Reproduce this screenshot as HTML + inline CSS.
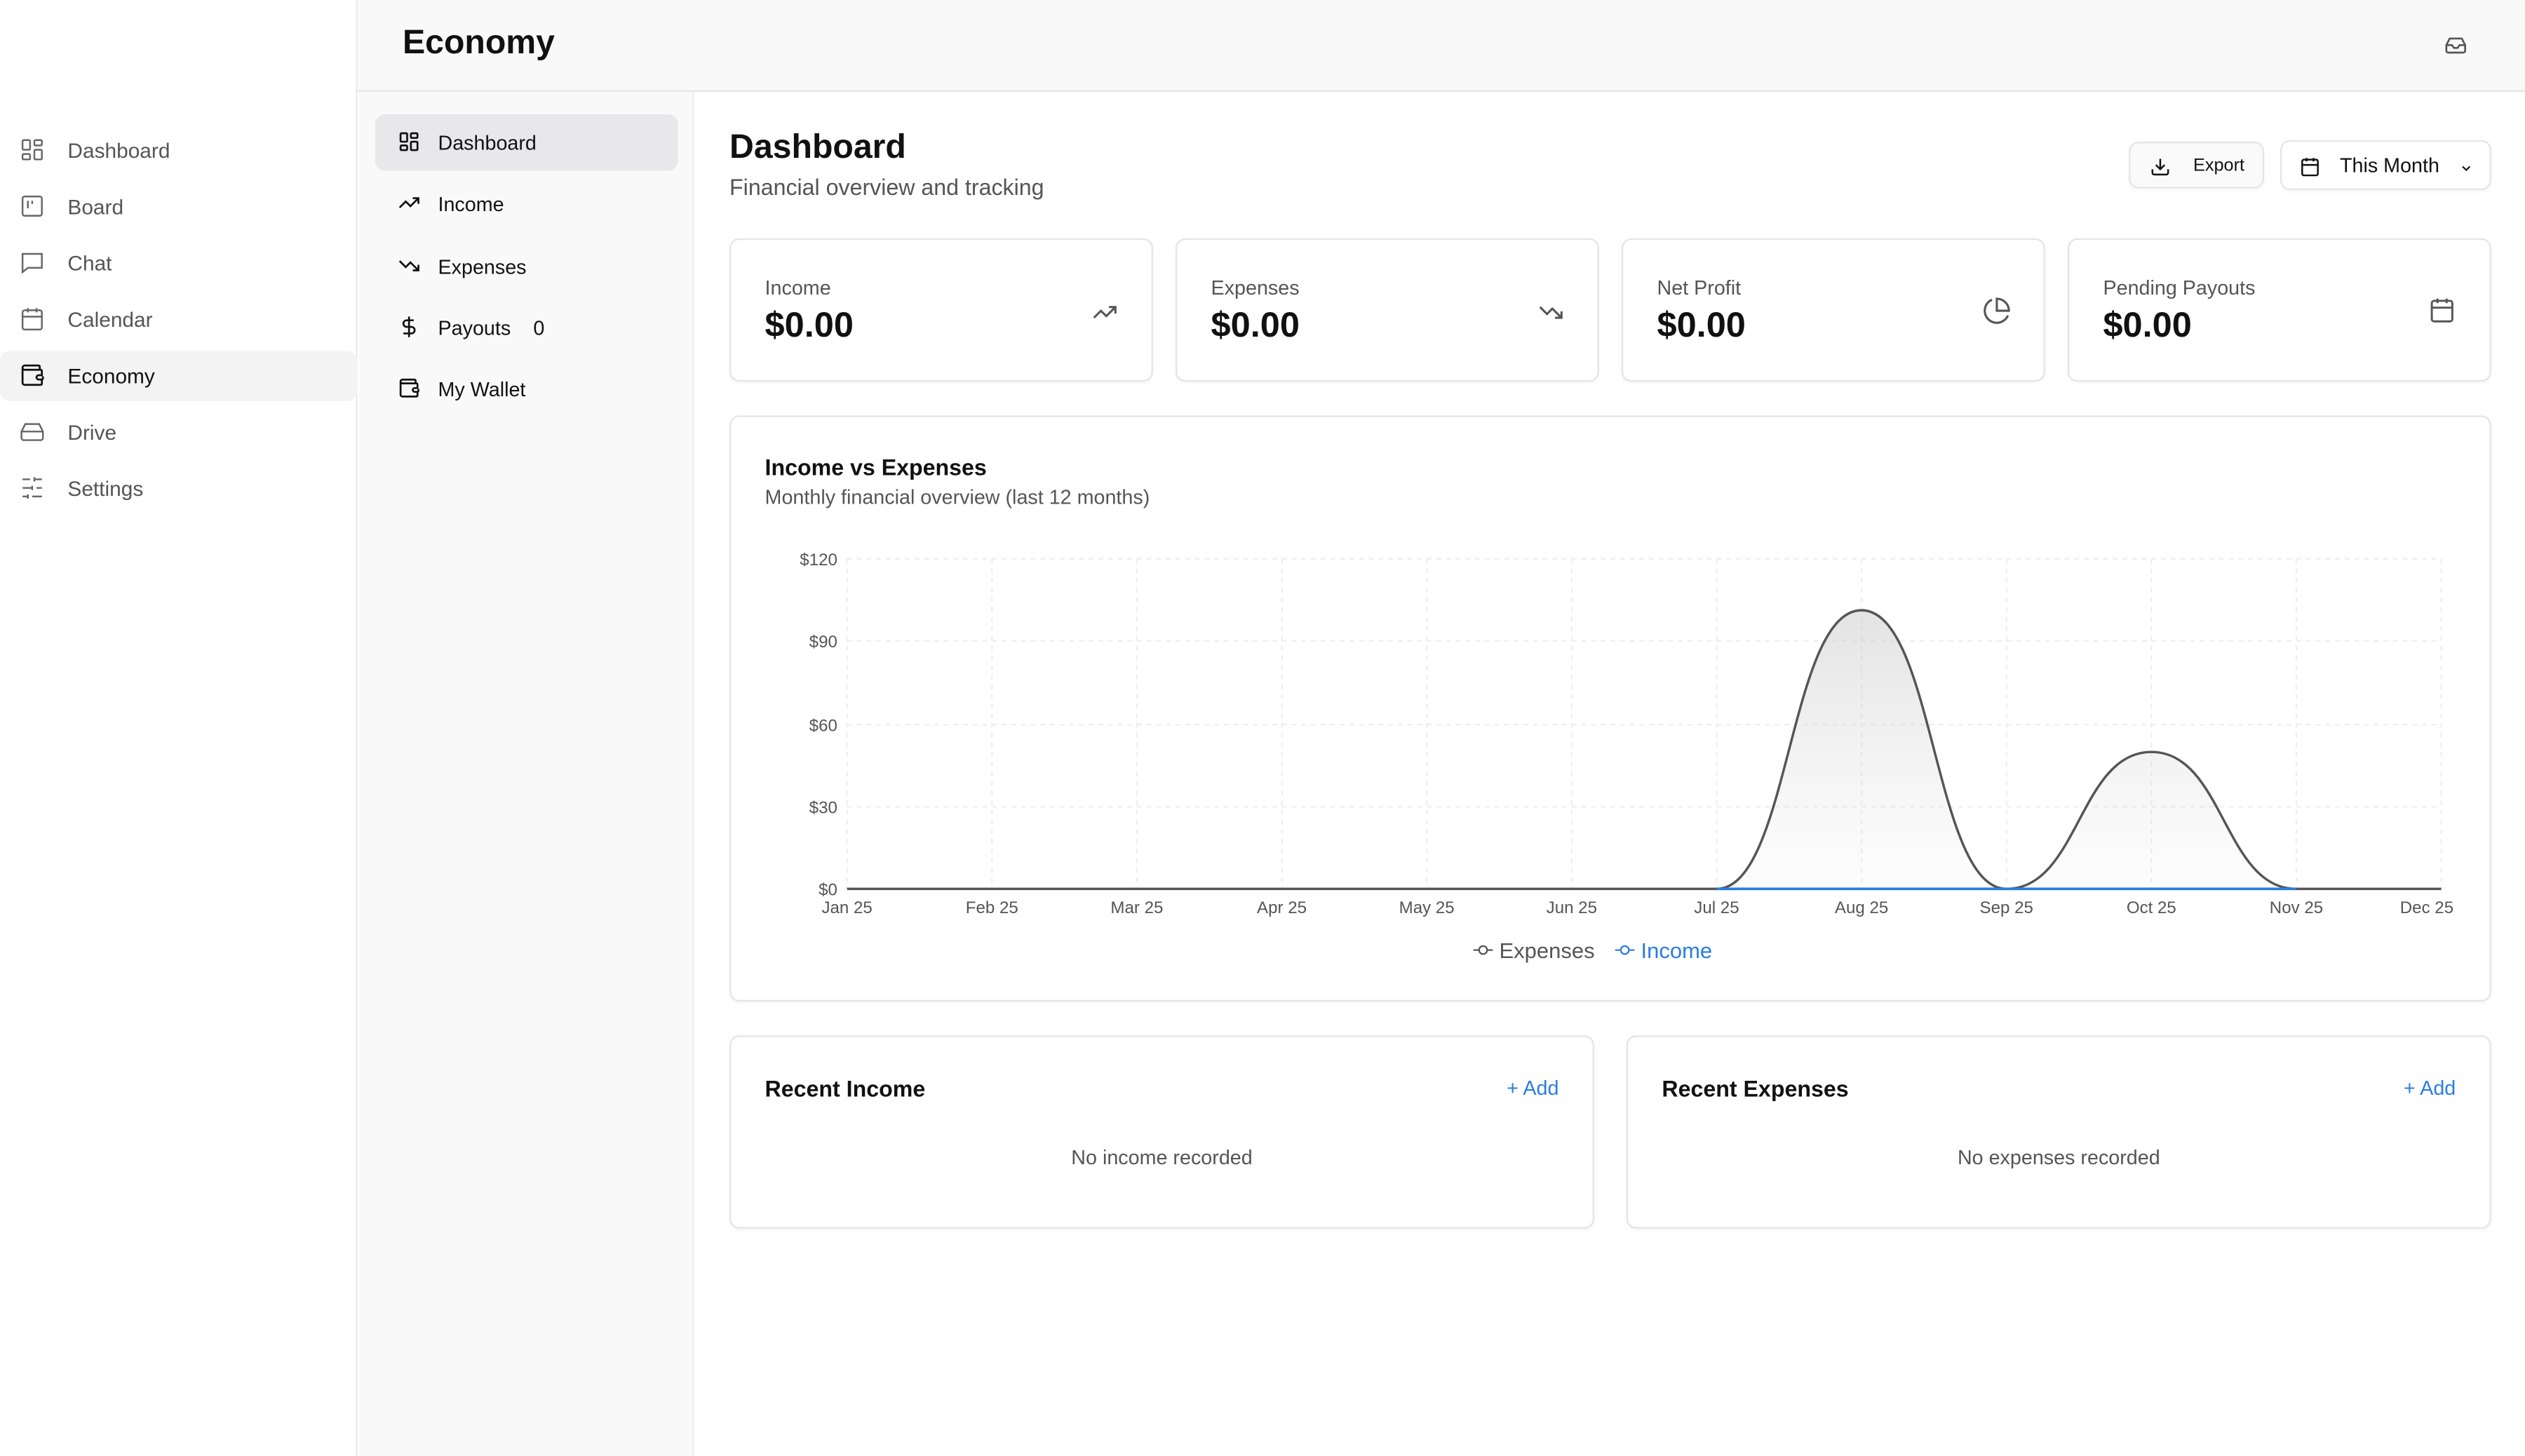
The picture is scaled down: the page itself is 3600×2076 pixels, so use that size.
<!DOCTYPE html>
<html><head><meta charset="utf-8"><style>
*{box-sizing:border-box;margin:0;padding:0}
html,body{width:3600px;height:2076px;overflow:hidden;background:#fff;font-family:"Liberation Sans",sans-serif}
#w{width:1568px;height:904.2px;transform:scale(2.295918);transform-origin:0 0;position:relative;color:#111}
.a{position:absolute}
.side{left:0;top:0;width:222px;height:905px;background:#fff;border-right:1px solid #ebebeb}
.top{left:222px;top:0;right:0;height:57px;background:#f9f9f9;border-bottom:1px solid #e6e6e6}
.sub{left:223px;top:57px;width:208px;height:848px;background:#f9f9f9;border-right:1px solid #ececec}
.ni{position:absolute;left:0;width:222px;height:31px;font-size:13px;color:#555;display:flex;align-items:center;padding-left:42px}
.ni svg{position:absolute;left:12px;top:7px}
.si{position:absolute;left:233px;width:188px;height:35px;font-size:12.5px;color:#111;display:flex;align-items:center;padding-left:39px}
.si svg{position:absolute;left:14px;top:10px}
.card{background:#fff;border:1px solid #e5e5e5;border-radius:6px;box-shadow:0 1px 2px rgba(0,0,0,.04)}
.lbl{font-size:12.5px;color:#555}
.val{font-size:22px;font-weight:bold;color:#111}
svg{overflow:visible}
</style></head><body><div id="w">
<div class="a side"></div>
<div class="ni" style="top:78px"><svg width="16" height="16" viewBox="0 0 24 24" fill="none" stroke="#666" stroke-width="1.6"><rect x="3" y="3" width="7" height="9" rx="1"/><rect x="14" y="3" width="7" height="5" rx="1"/><rect x="14" y="12" width="7" height="9" rx="1"/><rect x="3" y="16" width="7" height="5" rx="1"/></svg>Dashboard</div>
<div class="ni" style="top:113px"><svg width="16" height="16" viewBox="0 0 24 24" fill="none" stroke="#666" stroke-width="1.6"><rect x="3" y="3" width="18" height="18" rx="2"/><path d="M8 7v7M12 7v3"/></svg>Board</div>
<div class="ni" style="top:148px"><svg width="16" height="16" viewBox="0 0 24 24" fill="none" stroke="#666" stroke-width="1.6"><path d="M3 4h18v13H8l-5 4z"/></svg>Chat</div>
<div class="ni" style="top:183px"><svg width="16" height="16" viewBox="0 0 24 24" fill="none" stroke="#666" stroke-width="1.6"><rect x="3" y="4" width="18" height="18" rx="2"/><path d="M8 2v4M16 2v4M3 10h18"/></svg>Calendar</div>
<div class="ni" style="top:218px;background:#f3f3f3;border-radius:6px;color:#111"><svg width="16" height="16" viewBox="0 0 24 24" fill="none" stroke="#111" stroke-width="1.8"><path d="M19 7V4a1 1 0 0 0-1-1H5a2 2 0 0 0 0 4h15a1 1 0 0 1 1 1v4h-3a2 2 0 0 0 0 4h3a1 1 0 0 0 1-1v-2"/><path d="M3 5v14a2 2 0 0 0 2 2h15a1 1 0 0 0 1-1v-4"/></svg>Economy</div>
<div class="ni" style="top:253px"><svg width="16" height="16" viewBox="0 0 24 24" fill="none" stroke="#666" stroke-width="1.6"><path d="M2 12h20M5.5 5h13L22 12v6a2 2 0 0 1-2 2H4a2 2 0 0 1-2-2v-6z"/><path d="M6 16h.01M10 16h.01"/></svg>Drive</div>
<div class="ni" style="top:288px"><svg width="16" height="16" viewBox="0 0 24 24" fill="none" stroke="#666" stroke-width="1.6"><path d="M3 4h7M14 4h7M3 12h9M16 12h5M3 20h5M12 20h9M14 2v4M12 10v4M8 18v4"/></svg>Settings</div>

<div class="a top"><div class="a" style="left:28px;top:15px;font-size:21px;font-weight:bold">Economy</div>
<svg class="a" style="left:1296px;top:21px" width="14" height="14" viewBox="0 0 24 24" fill="none" stroke="#555" stroke-width="2"><path d="M22 12h-6l-2 3h-4l-2-3H2"/><path d="M5.5 5h13L22 12v6a2 2 0 0 1-2 2H4a2 2 0 0 1-2-2v-6z"/></svg></div>

<div class="a sub"></div>
<div class="si" style="top:71px;background:#e8e8ea;border-radius:6px"><svg width="14" height="14" viewBox="0 0 24 24" fill="none" stroke="#111" stroke-width="2"><rect x="3" y="3" width="7" height="9" rx="1"/><rect x="14" y="3" width="7" height="5" rx="1"/><rect x="14" y="12" width="7" height="9" rx="1"/><rect x="3" y="16" width="7" height="5" rx="1"/></svg>Dashboard</div>
<div class="si" style="top:109px"><svg width="14" height="14" viewBox="0 0 24 24" fill="none" stroke="#111" stroke-width="2"><path d="M22 7l-8.5 8.5-5-5L2 17M16 7h6v6"/></svg>Income</div>
<div class="si" style="top:148px"><svg width="14" height="14" viewBox="0 0 24 24" fill="none" stroke="#111" stroke-width="2"><path d="M22 17l-8.5-8.5-5 5L2 7M16 17h6v-6"/></svg>Expenses</div>
<div class="si" style="top:186px"><svg width="14" height="14" viewBox="0 0 24 24" fill="none" stroke="#111" stroke-width="2"><path d="M12 1v22M17 5H9.5a3.5 3.5 0 0 0 0 7h5a3.5 3.5 0 0 1 0 7H6"/></svg>Payouts<span style="margin-left:14px">0</span></div>
<div class="si" style="top:224px"><svg width="14" height="14" viewBox="0 0 24 24" fill="none" stroke="#111" stroke-width="2"><path d="M19 7V4a1 1 0 0 0-1-1H5a2 2 0 0 0 0 4h15a1 1 0 0 1 1 1v4h-3a2 2 0 0 0 0 4h3a1 1 0 0 0 1-1v-2"/><path d="M3 5v14a2 2 0 0 0 2 2h15a1 1 0 0 0 1-1v-4"/></svg>My Wallet</div>

<div class="a" style="left:453px;top:80px;font-size:21px;font-weight:bold">Dashboard</div>
<div class="a" style="left:453px;top:108px;font-size:14px;color:#555">Financial overview and tracking</div>
<div class="a card" style="left:1322px;top:88px;width:84px;height:29px;font-size:11px;display:flex;align-items:center;padding-left:39px;background:#fafafa"><svg class="a" style="left:12px;top:8px" width="13" height="13" viewBox="0 0 24 24" fill="none" stroke="#111" stroke-width="2"><path d="M21 15v4a2 2 0 0 1-2 2H5a2 2 0 0 1-2-2v-4M7 10l5 5 5-5M12 15V3"/></svg>Export</div>
<div class="a card" style="left:1416px;top:87px;width:131px;height:31px;font-size:12.5px;display:flex;align-items:center;padding-left:36px"><svg class="a" style="left:11px;top:9px" width="13" height="13" viewBox="0 0 24 24" fill="none" stroke="#111" stroke-width="2"><rect x="3" y="4" width="18" height="18" rx="2"/><path d="M8 2v4M16 2v4M3 10h18"/></svg>This Month<svg class="a" style="left:110px;top:12px" width="9" height="9" viewBox="0 0 24 24" fill="none" stroke="#111" stroke-width="2.5"><path d="M6 9l6 6 6-6"/></svg></div>

<div class="a card" style="left:453px;top:148px;width:263px;height:89px"><div class="a lbl" style="left:21px;top:23px">Income</div><div class="a val" style="left:21px;top:40px">$0.00</div><svg class="a" style="left:224px;top:37px" width="16" height="16" viewBox="0 0 24 24" fill="none" stroke="#555" stroke-width="2"><path d="M22 7l-8.5 8.5-5-5L2 17M16 7h6v6"/></svg></div>
<div class="a card" style="left:730px;top:148px;width:263px;height:89px"><div class="a lbl" style="left:21px;top:23px">Expenses</div><div class="a val" style="left:21px;top:40px">$0.00</div><svg class="a" style="left:224px;top:37px" width="16" height="16" viewBox="0 0 24 24" fill="none" stroke="#555" stroke-width="2"><path d="M22 17l-8.5-8.5-5 5L2 7M16 17h6v-6"/></svg></div>
<div class="a card" style="left:1007px;top:148px;width:263px;height:89px"><div class="a lbl" style="left:21px;top:23px">Net Profit</div><div class="a val" style="left:21px;top:40px">$0.00</div><svg class="a" style="left:223px;top:35px" width="18" height="18" viewBox="0 0 24 24" fill="none" stroke="#555" stroke-width="1.8"><path d="M21.2 15.9A10 10 0 1 1 8 2.8"/><path d="M22 12A10 10 0 0 0 12 2v10z"/></svg></div>
<div class="a card" style="left:1284px;top:148px;width:263px;height:89px"><div class="a lbl" style="left:21px;top:23px">Pending Payouts</div><div class="a val" style="left:21px;top:40px">$0.00</div><svg class="a" style="left:223px;top:35px" width="17" height="17" viewBox="0 0 24 24" fill="none" stroke="#555" stroke-width="1.8"><rect x="3" y="4" width="18" height="18" rx="2"/><path d="M8 2v4M16 2v4M3 10h18"/></svg></div>

<div class="a card" style="left:453px;top:258px;width:1094px;height:364px"><div class="a" style="left:21px;top:23px;font-size:14px;font-weight:bold">Income vs Expenses</div><div class="a" style="left:21px;top:43px;font-size:12.5px;color:#555">Monthly financial overview (last 12 months)</div></div>
<svg class="a" style="left:0;top:0" width="1568" height="904" font-family="Liberation Sans" font-size="10.5" fill="#555">
<defs><linearGradient id="g" x1="0" y1="0" x2="0" y2="1"><stop offset="0" stop-color="#ccc" stop-opacity=".55"/><stop offset="1" stop-color="#ddd" stop-opacity=".05"/></linearGradient></defs>
<g stroke="#eee" stroke-dasharray="3 3">
<path d="M526 347H1516M526 398H1516M526 450H1516M526 501H1516"/>
<path d="M526 347V552M616 347V552M706 347V552M796 347V552M886 347V552M976 347V552M1066 347V552M1156 347V552M1246 347V552M1336 347V552M1426 347V552M1516 347V552"/>
</g>
<g text-anchor="end"><text x="520" y="351">$120</text><text x="520" y="402">$90</text><text x="520" y="454">$60</text><text x="520" y="505">$30</text><text x="520" y="556">$0</text></g>
<g text-anchor="middle"><text x="526" y="567">Jan 25</text><text x="616" y="567">Feb 25</text><text x="706" y="567">Mar 25</text><text x="796" y="567">Apr 25</text><text x="886" y="567">May 25</text><text x="976" y="567">Jun 25</text><text x="1066" y="567">Jul 25</text><text x="1156" y="567">Aug 25</text><text x="1246" y="567">Sep 25</text><text x="1336" y="567">Oct 25</text><text x="1426" y="567">Nov 25</text><text x="1507" y="567">Dec 25</text></g>
<path d="M1066 552C1111 552 1111 379 1156 379C1201 379 1201 552 1246 552C1291 552 1291 467 1336 467C1381 467 1381 552 1426 552Z" fill="url(#g)"/>
<path d="M526 552H1516" stroke="#555" stroke-width="1.5"/>
<path d="M1066 552C1111 552 1111 379 1156 379C1201 379 1201 552 1246 552C1291 552 1291 467 1336 467C1381 467 1381 552 1426 552" stroke="#555" stroke-width="1.5" fill="none"/>
<path d="M1066 552H1426" stroke="#2a7de1" stroke-width="1.5"/>
<g font-size="13.5"><path d="M915 590H927" stroke="#555"/><circle cx="921" cy="590" r="2.5" fill="#fff" stroke="#555"/><text x="931" y="595">Expenses</text>
<path d="M1003 590H1015" stroke="#2a7de1"/><circle cx="1009" cy="590" r="2.5" fill="#fff" stroke="#2a7de1"/><text x="1019" y="595" fill="#2a7de1">Income</text></g>
</svg>

<div class="a card" style="left:453px;top:643px;width:537px;height:120px"><div class="a" style="left:21px;top:24px;font-size:14px;font-weight:bold">Recent Income</div><div class="a" style="right:21px;top:25px;font-size:12.5px;color:#2a7de1">+ Add</div><div class="a" style="left:0;right:0;top:68px;text-align:center;font-size:12.5px;color:#555">No income recorded</div></div>
<div class="a card" style="left:1010px;top:643px;width:537px;height:120px"><div class="a" style="left:21px;top:24px;font-size:14px;font-weight:bold">Recent Expenses</div><div class="a" style="right:21px;top:25px;font-size:12.5px;color:#2a7de1">+ Add</div><div class="a" style="left:0;right:0;top:68px;text-align:center;font-size:12.5px;color:#555">No expenses recorded</div></div>
</div></body></html>
